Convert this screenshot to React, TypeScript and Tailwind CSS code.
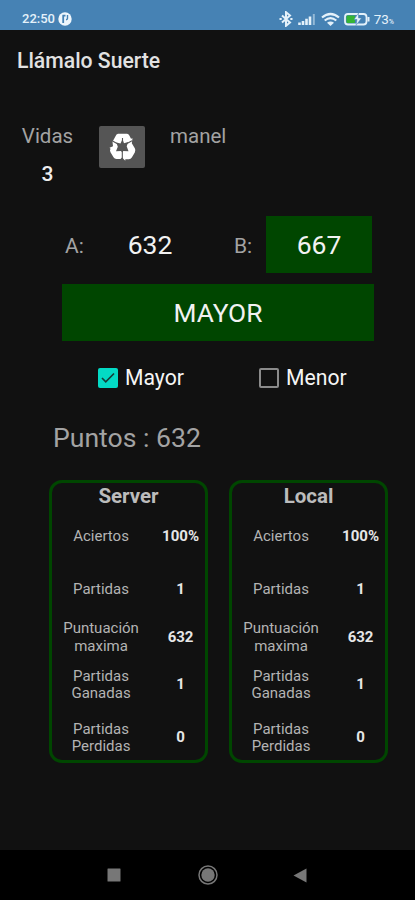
import { Check } from 'lucide-react';

interface Stat {
  label: string[];
  value: string;
  row: string;
}

const stats: Stat[] = [
  { label: ['Aciertos'], value: '100%', row: 'h-[54px]' },
  { label: ['Partidas'], value: '1', row: 'h-[51px]' },
  { label: ['Puntuación', 'maxima'], value: '632', row: 'h-[45px]' },
  { label: ['Partidas', 'Ganadas'], value: '1', row: 'h-[50px]' },
  { label: ['Partidas', 'Perdidas'], value: '0', row: 'h-[56px]' },
];

function StatusBar() {
  return (
    <header className="flex h-[30px] items-start justify-between bg-[#4682b4] pl-[22px] pr-[21px] pt-[11px] text-[#e4f1fa]">
      <div className="flex h-4 items-center gap-[3px]">
        <span className="text-[13px] font-medium leading-4">22:50</span>
        <svg className="h-[14px] w-[14px]" viewBox="0 0 14 14">
          <circle cx="7" cy="7" r="6.7" fill="#eef6fc" />
          <path d="M5.2 11V3.3M4.5 3.7h3" fill="none" stroke="#4682b4" strokeWidth="1.8" />
          <path d="M9.5 3v3.5q0 1-1.5 1.2" fill="none" stroke="#4682b4" strokeWidth="1.4" />
        </svg>
      </div>
      <div className="flex h-4 items-center">
        <svg className="h-4 w-[92px]" viewBox="-2 0 92 16" fill="none" stroke="#e4f1fa">
          <path d="M1 4.5l8 7-4 3.3V1.2l4 3.3-8 7" strokeWidth="2" />
          <path d="M-1.5 8h2.2M9.3 8h2.2" strokeWidth="2.2" />
          <path d="M18.500 14v-2.500M22 14v-4M25.500 14V7.800M29 14V5.500" strokeWidth="2.6" />
          <path d="M32.800 14V3" strokeWidth="2" opacity="0.5" />
          <path d="M41 6.500q8.500-7 17 0M43.700 9.500q5.800-4.600 11.600 0" strokeWidth="2.200" />
          <path d="M46 11.800q3.500-2.400 7 0l-3.500 3.200z" fill="#e4f1fa" stroke="none" />
          <rect x="64" y="3" width="21.5" height="10.5" rx="3" strokeWidth="1.8" />
          <rect x="65.5" y="4.5" width="8.5" height="7.5" rx="1" fill="#35b535" stroke="none" />
          <path d="M77.5 2l-4.5 6.500h3L75 14.500l5.500-7.500h-3z" fill="#e4f1fa" stroke="#4682b4" strokeWidth="0.5" />
          <path d="M87.500 6v4.500" strokeWidth="2" />
        </svg>
        <span className="ml-[3px] text-[13.5px] leading-4">73</span>
        <span className="mt-[5px] text-[7px] font-medium leading-[8px]">%</span>
      </div>
    </header>
  );
}

// three fat arrows chasing each other, split by narrow gaps
function RecycleIcon() {
  return (
    <svg className="h-7 w-[27px]" viewBox="0 0 27 28">
      <path
        d="M9 0.8h9q1.5 0 2.5 2l1.5 3 1.5-0.5-0.7 5 3 5q1.2 2 0 4.2l-3 5q-1 1.7-3 1.7h-3.5v1.5l-3.3-3.2-1.5 1.5H7.5q-2 0-3-1.7l-3-5q-1-1.7 0-3.5L0.5 14.8l3.5-1.5-0.5-4.5 3-5.500q0.800-2.500 2.500-2.500z"
        fill="#ffffff"
      />
      <path
        d="M13.500 6l1.500 4.300 4.200-1.200-1.500 4.200 1.800 5-5.200-0.300-1 1.500-1.300-1.500-5 0.300 1.800-4.500-1.500-4.200 4.200 0.800z"
        fill="#555555"
      />
      <path d="M13.300 17v10M8.500 10.800L3.500 8M18 10.500l5-2.800M13.500 8V5" stroke="#555555" strokeWidth="1.1" fill="none" />
    </svg>
  );
}

function Option({ label, checked }: { label: string; checked?: boolean }) {
  return (
    <div className="flex h-6 items-center">
      {checked ? (
        <span className="flex h-5 w-5 items-center justify-center rounded-[2px] bg-[#03dac5]">
          <Check className="h-[18px] w-[18px] text-[#153c38]" strokeWidth={2.2} strokeLinecap="butt" strokeLinejoin="miter" />
        </span>
      ) : (
        <span className="h-5 w-5 rounded-[2px] border-2 border-[#8b8b8b]" />
      )}
      <span className="ml-[7px] text-[21.2px] leading-6 text-[#f5f5f5]">{label}</span>
    </div>
  );
}

function StatsCard({ title }: { title: string }) {
  return (
    <section className="h-[283px] w-[159px] rounded-[13px] border-[3px] border-[#004600]">
      <h2 className="h-[26px] text-center text-[20.5px] font-bold leading-[26px] text-[#bcbcbc]">{title}</h2>
      {stats.map((stat, i) => (
        <div key={i} className={`flex items-center pt-[2px] ${stat.row}`}>
          <div className="ml-[5px] w-[90px] text-center text-[15px] leading-[17.5px] text-[#b4b4b4]">
            {stat.label.map(line => (
              <div key={line}>{line}</div>
            ))}
          </div>
          <div className="ml-[11px] w-[50px] pb-[2px] text-center text-[15px] font-bold leading-[18px] text-[#e6e6e6]">
            {stat.value}
          </div>
        </div>
      ))}
    </section>
  );
}

export default function App() {
  return (
    <div className="flex h-[900px] w-[415px] flex-col overflow-hidden bg-[#111111] font-['Roboto',sans-serif]">
      <StatusBar />
      <h1 className="h-[60px] pl-[17px] text-[21.2px] font-medium leading-[61px] text-[#e2e2e2]">Llámalo Suerte</h1>

      <main className="flex-1">
        <div className="mt-[33px] flex h-[71px] pl-[21px]">
          <div className="flex w-[53px] flex-col items-center">
            <span className="text-[20.5px] leading-[26px] text-[#a3a3a3]">Vidas</span>
            <span className="mt-[12px] text-[21px] font-medium leading-[26px] text-[#ededed]">3</span>
          </div>
          <button className="ml-[25px] mt-[3px] flex h-[42px] w-[46px] items-center justify-center rounded-[2px] bg-[#555555]">
            <RecycleIcon />
          </button>
          <span className="ml-[25px] text-[20.5px] leading-[26px] text-[#a3a3a3]">manel</span>
        </div>

        <div className="mt-[22px] flex h-[57px] items-center pl-[65px]">
          <span className="w-[40px] pt-[5px] text-[21px] text-[#a3a3a3]">A:</span>
          <span className="w-[90px] text-center text-[26.5px] text-[#f2f2f2]">632</span>
          <span className="ml-[39px] w-[32px] pt-[5px] text-[21px] text-[#a3a3a3]">B:</span>
          <span className="flex h-[57px] w-[106px] items-center justify-center bg-[#004600] text-[26.5px] text-[#f2f2f2]">
            667
          </span>
        </div>
        <div className="ml-[62px] mt-[11px] flex h-[57px] w-[312px] items-center justify-center bg-[#004600] pt-[2px] text-[26.3px] text-[#f2f2f2]">
          MAYOR
        </div>

        <div className="mt-[25px] grid grid-cols-[161px_auto] pl-[98px]">
          <Option label="Mayor" checked />
          <Option label="Menor" />
        </div>

        <p className="mt-[32px] pl-[53px] text-[26.6px] leading-8 text-[#a3a3a3]">Puntos : 632</p>

        <div className="mt-[26px] flex gap-[21px] pl-[49px]">
          <StatsCard title="Server" />
          <StatsCard title="Local" />
        </div>
      </main>

      <nav className="flex h-[50px] items-center bg-black">
        <svg className="ml-[107px] h-[14px] w-[14px]" viewBox="0 0 14 14">
          <rect x="0.5" y="0.5" width="13" height="13" rx="0.5" fill="#777777" />
        </svg>
        <svg className="ml-[77px] h-5 w-5" viewBox="0 0 20 20">
          <circle cx="10" cy="10" r="9" fill="none" stroke="#777777" strokeWidth="1.5" />
          <circle cx="10" cy="10" r="6.7" fill="#777777" />
        </svg>
        <svg className="ml-[75px] h-[15px] w-[14px]" viewBox="0 0 14 15">
          <path d="M13.5 0.5v14L0.5 7.5z" fill="#777777" />
        </svg>
      </nav>
    </div>
  );
}
